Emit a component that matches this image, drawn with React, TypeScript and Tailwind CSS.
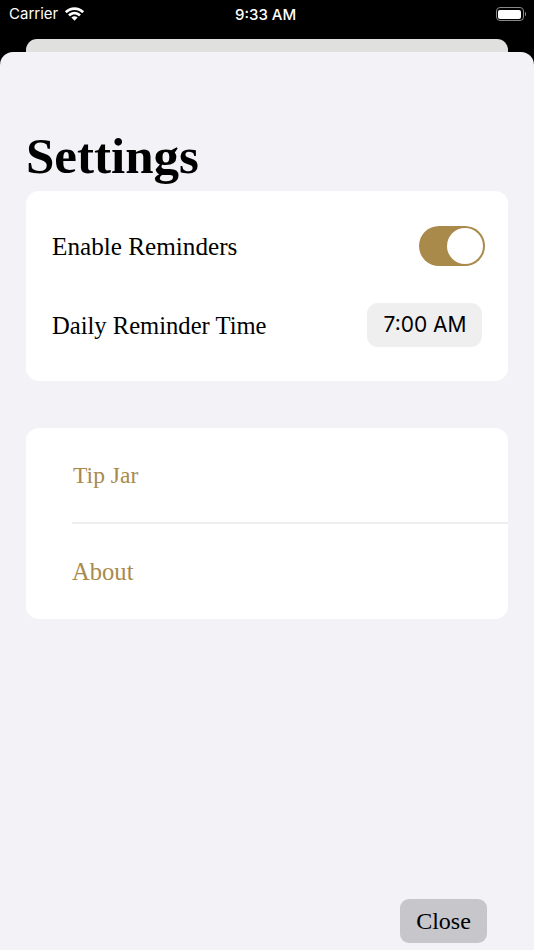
const serif = { fontFamily: '"Liberation Serif", serif' }

function Wifi() {
  return (
    <svg width="19" height="14" viewBox="0.9 0.4 17.2 12.3" fill="white">
      <path d="M9.5 2.9c2.6 0 5 1 6.8 2.7.1.1.3.1.4 0l1.3-1.3c.1-.2.1-.4 0-.5C15.7 1.6 12.7.4 9.5.4S3.3 1.6 1 3.8c-.1.1-.1.3 0 .5l1.3 1.3c.1.1.3.1.4 0C4.500 3.900 6.900 2.900 9.500 2.900z" />
      <path d="M9.500 7.100c1.500 0 2.800.5 3.900 1.500.1.100.3.100.4 0l1.300-1.300c.1-.2.1-.4 0-.5-1.500-1.400-3.500-2.200-5.600-2.200s-4.100.8-5.600 2.200c-.1.100-.1.300 0 .5l1.300 1.300c.1.100.3.100.4 0 1.100-1 2.400-1.500 3.900-1.500z" />
      <path d="M12.100 10c.1-.1.100-.3 0-.5-.7-.6-1.600-1-2.600-1s-1.900.4-2.600 1c-.1.200-.1.400 0 .5l2.400 2.500c.1.100.3.100.4 0z" />
    </svg>
  )
}

function StatusBar() {
  return (
    <div className="relative flex items-center justify-between h-[28px] pl-[9px] pr-[8px] text-white font-['Inter',sans-serif]">
      <div className="flex items-center gap-[7px]">
        <span className="text-[15px]">Carrier</span>
        <Wifi />
      </div>
      <span className="absolute left-[235px] top-[4px] text-[15px] font-medium">9:33 AM</span>
      <div className="flex items-center gap-px">
        <div className="w-[28px] h-[14px] rounded-[4px] border border-[#8a8a8a] p-[1.5px]">
          <div className="w-full h-full rounded-[2px] bg-white" />
        </div>
        <div className="w-[1.5px] h-[4px] rounded-r-sm bg-[#8a8a8a]" />
      </div>
    </div>
  )
}

export default function App() {
  return (
    <div className="flex flex-col w-[534px] h-[950px] overflow-hidden bg-black">
      <StatusBar />
      <div className="mx-[26px] mt-[11px] h-[13px] shrink-0 rounded-t-[11px] bg-[#e0e0df]" />
      <div className="flex flex-col flex-1 px-[26px] rounded-t-[13px] bg-[#f2f2f7]" style={serif}>
        <h1 className="mt-[70px] text-[51px] leading-[68px] font-bold text-black">Settings</h1>
        <div className="h-[190px] mt-[1px] px-[26px] rounded-[13px] bg-white">
          <div className="flex items-center justify-between h-[110px]">
            <span className="pt-[2px] text-[25.2px] text-black">Enable Reminders</span>
            <div className="flex justify-end items-center w-[66px] h-[40px] -mr-[3px] p-[2px] rounded-full bg-[#a98a4b]">
              <div className="w-[36px] h-[36px] rounded-full bg-white" />
            </div>
          </div>
          <div className="flex items-center justify-between h-[44px] mt-[2px]">
            <span className="pt-[2px] text-[24.6px] text-black">Daily Reminder Time</span>
            <div className="flex items-center justify-center w-[115px] h-[44px] pl-px rounded-[11px] bg-[#efeff0] text-[21px] text-black font-['Inter',sans-serif]">
              7:00 AM
            </div>
          </div>
        </div>
        <div className="mt-[47px] h-[191px] rounded-[13px] bg-white text-[#a98a4b]">
          <div className="flex items-center h-[96px] ml-[46px] pl-px pt-[2px] border-b-2 border-[#eeeef0] text-[23.6px]">Tip Jar</div>
          <div className="flex items-center h-[95px] ml-[46px] pt-[2px] text-[24.6px]">About</div>
        </div>
        <div className="flex justify-end mt-auto mb-[7px] mr-[21px]">
          <button className="w-[87px] h-[44px] rounded-[9px] bg-[#c7c6cb] text-[24px] text-black">Close</button>
        </div>
      </div>
    </div>
  )
}
